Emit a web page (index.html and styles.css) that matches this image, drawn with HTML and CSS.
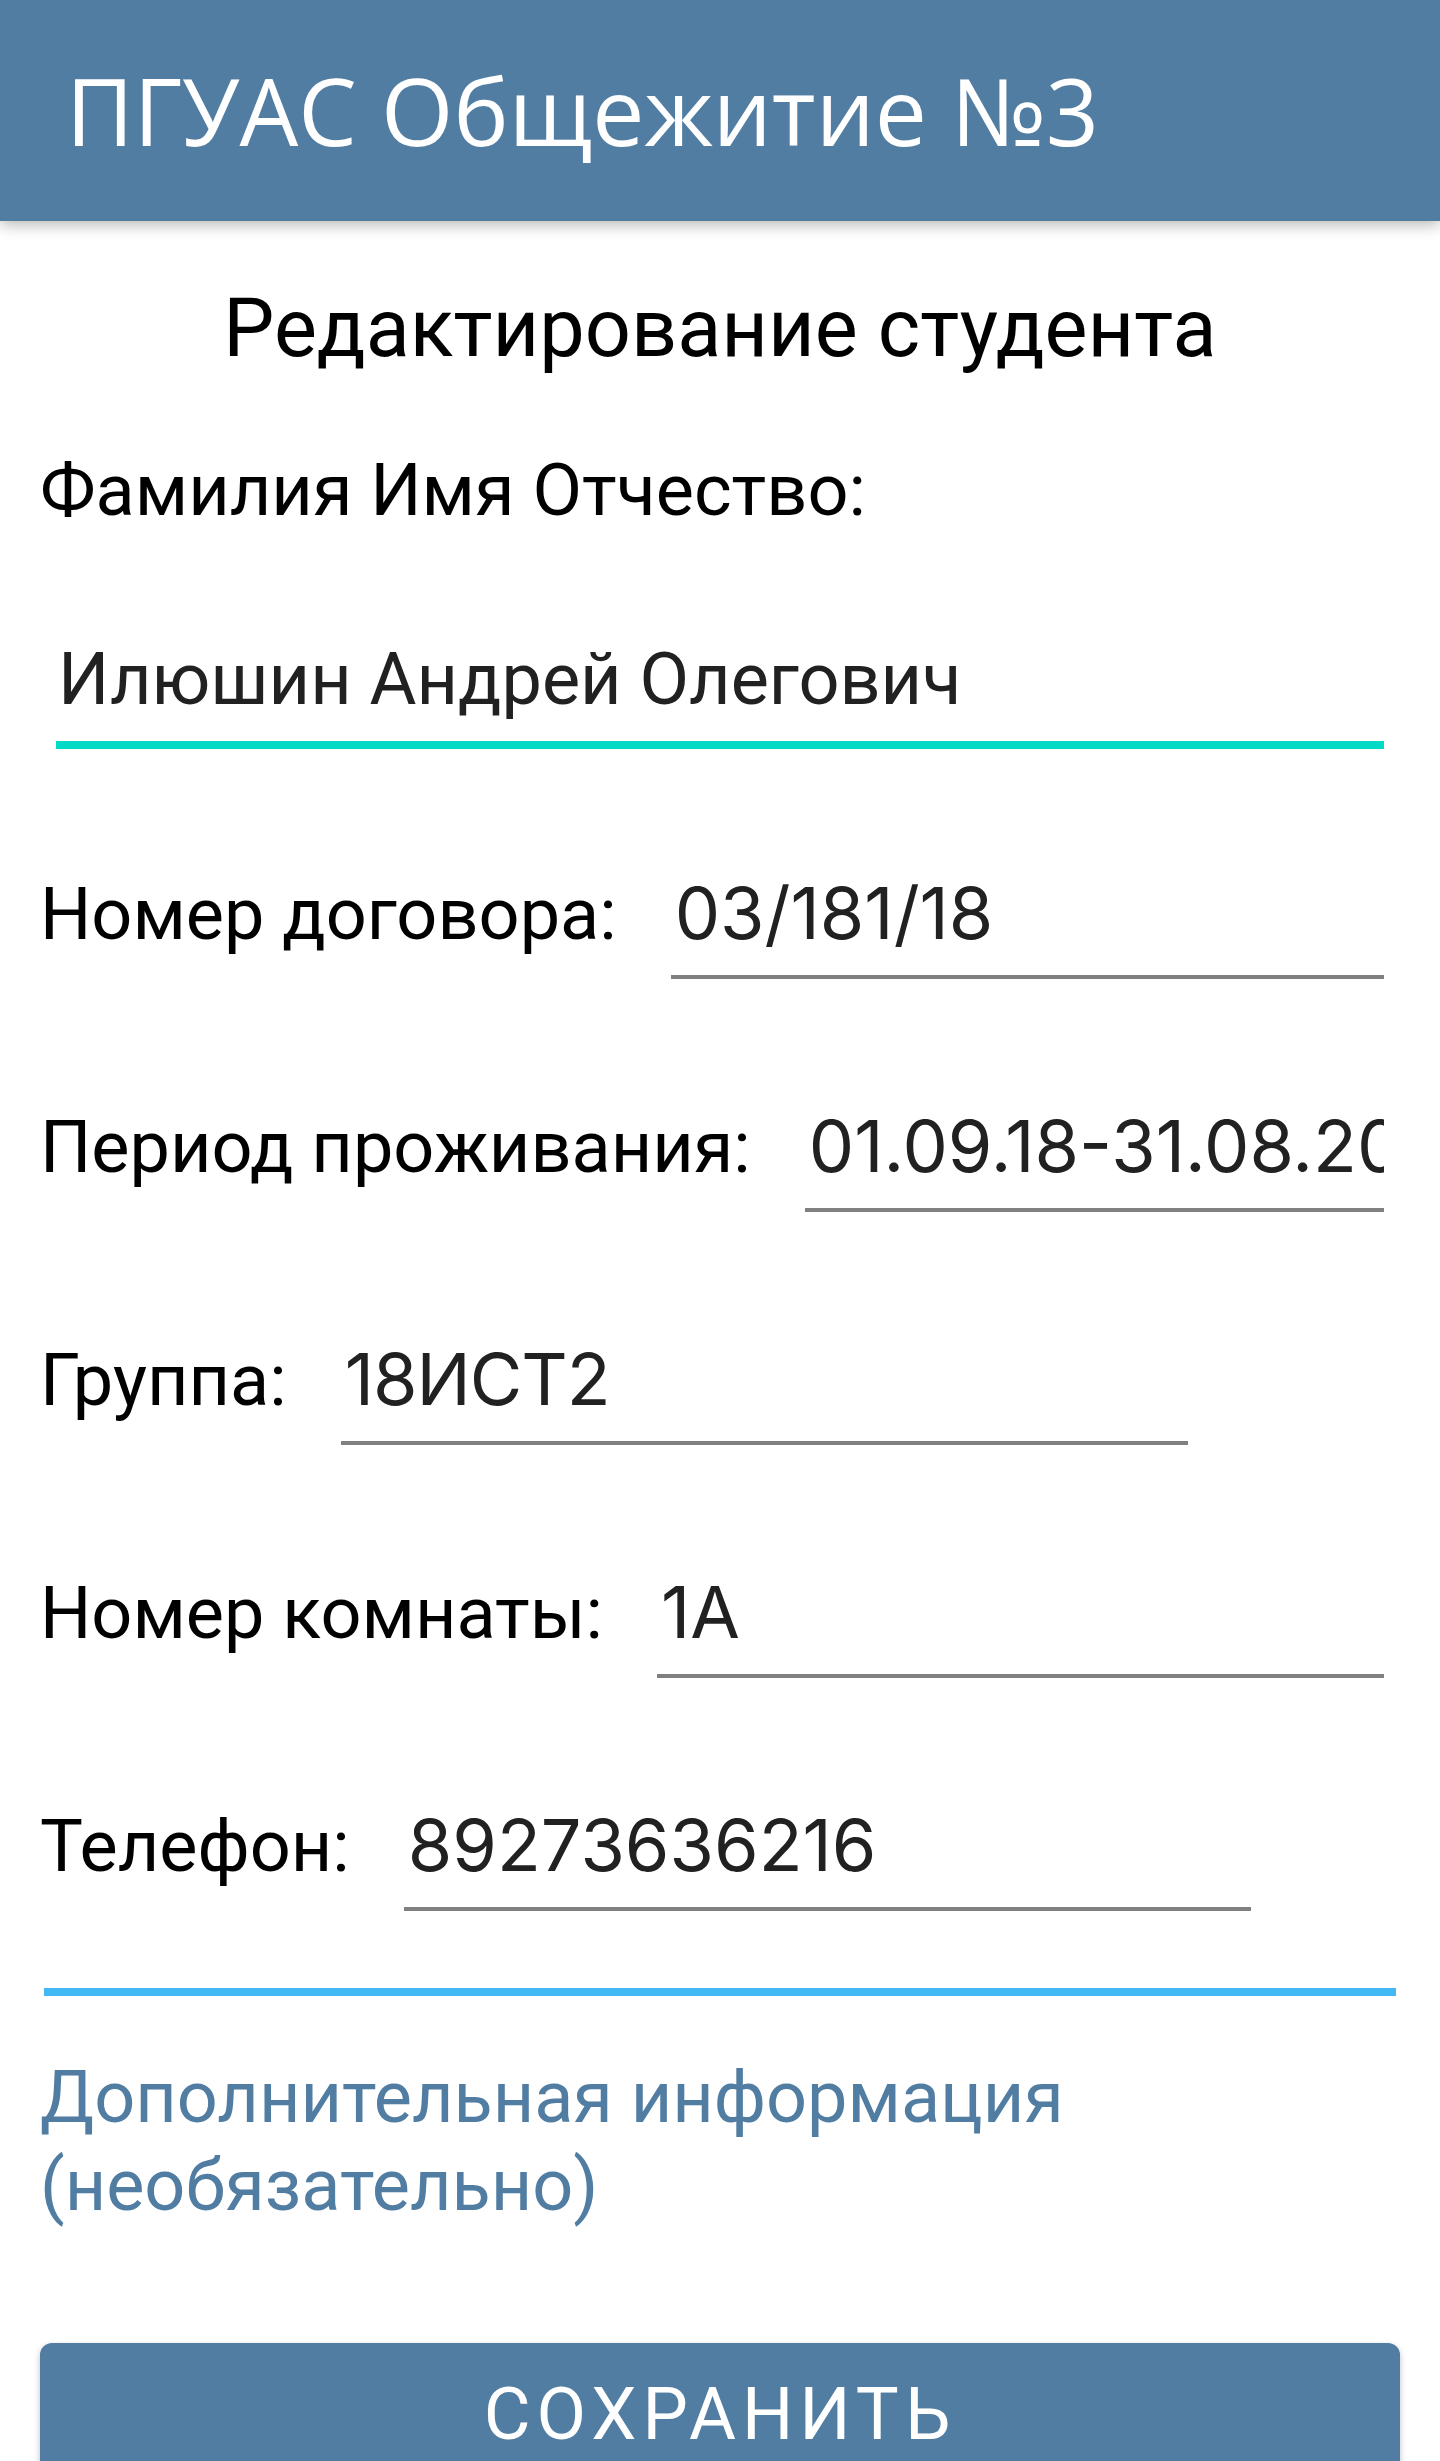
FILE: index.html
```html
<!DOCTYPE html>
<html lang="ru">
<head>
<meta charset="utf-8">
<title>ПГУАС Общежитие №3</title>
<link rel="stylesheet" href="styles.css">
</head>
<body>
<div class="screen">
  <header class="appbar">
    <h1 class="appbar__title">ПГУАС Общежитие №3</h1>
  </header>
  <main class="form">
    <h2 class="form__title">Редактирование студента</h2>
    <div class="label label--block">Фамилия Имя Отчество:</div>
    <div class="field field--name"><span class="field__text field__text--name">Илюшин Андрей Олегович</span></div>

    <div class="rows">
      <div class="row">
        <span class="label">Номер договора:</span>
        <div class="field field--grow"><span class="field__text">03/181/18</span></div>
      </div>
      <div class="row">
        <span class="label">Период проживания:</span>
        <div class="field field--grow"><span class="field__text">01.09.18-31.08.20</span></div>
      </div>
      <div class="row">
        <span class="label">Группа:</span>
        <div class="field field--fixed"><span class="field__text field__text--tight">18ИСТ2</span></div>
      </div>
      <div class="row">
        <span class="label">Номер комнаты:</span>
        <div class="field field--grow"><span class="field__text">1А</span></div>
      </div>
      <div class="row">
        <span class="label">Телефон:</span>
        <div class="field field--fixed"><span class="field__text">89273636216</span></div>
      </div>
    </div>

    <div class="divider"></div>
    <p class="extra">Дополнительная информация (необязательно)</p>
    <button class="save" type="button">СОХРАНИТЬ</button>
  </main>
</div>
</body>
</html>
```

FILE: styles.css
```css
html, body {
  margin: 0;
  padding: 0;
  background: #ffffff;
}

.screen {
  width: 1440px;
  height: 2461px;
  overflow: hidden;
  background: #ffffff;
}

.appbar {
  position: relative;
  z-index: 1;
  height: 221px;
  background: #517da2;
  display: flex;
  align-items: center;
  padding: 0 0 0 66px;
  box-shadow: 0 4px 14px rgba(0, 0, 0, 0.28);
}

.appbar__title {
  margin: 0;
  font-family: "Open Sans", "Noto Sans", sans-serif;
  font-weight: 400;
  font-size: 93px;
  line-height: 131px;
  color: #ffffff;
}

.form {
  padding: 0 40px;
  font-family: Roboto, "Noto Sans", sans-serif;
}

.form__title {
  margin: 58px 0 0;
  text-align: center;
  font-weight: 400;
  font-size: 81px;
  line-height: 100px;
  color: #000000;
}

.label {
  font-size: 72px;
  line-height: 88px;
  color: #000000;
  white-space: nowrap;
  flex: none;
}

.label--block {
  margin-top: 68px;
}

.field {
  border-bottom: 4px solid #808080;
  padding: 0 0 18px 4px;
  overflow: hidden;
  white-space: nowrap;
}

.field__text {
  font-family: Inter, "Noto Sans", sans-serif;
  font-size: 72px;
  line-height: 88px;
  color: #212121;
  display: block;
}

.field__text--tight {
  letter-spacing: -1px;
}

.field--name {
  margin: 101px 16px 0 16px;
  padding: 0 0 17px 2px;
  border-bottom: 8px solid #03dac5;
}

.field__text--name {
  font-family: Roboto, "Noto Sans", sans-serif;
}

.rows {
  margin-top: 120px;
  display: flex;
  flex-direction: column;
  gap: 123px;
}

.row {
  display: flex;
  align-items: baseline;
  gap: 54px;
  margin-right: 16px;
}

.field--grow {
  flex: 1;
  min-width: 0;
}

.field--fixed {
  width: 843px;
  flex: none;
}

.divider {
  margin: 77px 4px 0;
  height: 8px;
  background: #42b8f4;
}

.extra {
  margin: 58px 0 0;
  font-size: 72px;
  line-height: 88px;
  color: #517da2;
}

.save {
  display: block;
  width: 1360px;
  margin: 113px 0 0;
  padding: 28px 0;
  border: none;
  border-radius: 12px;
  background: #517da2;
  color: #ffffff;
  font-family: Roboto, "Noto Sans", sans-serif;
  font-weight: 400;
  font-size: 72px;
  line-height: 88px;
  letter-spacing: 6px;
  text-align: center;
  box-shadow: 0 3px 6px rgba(0, 0, 0, 0.25);
}
```
